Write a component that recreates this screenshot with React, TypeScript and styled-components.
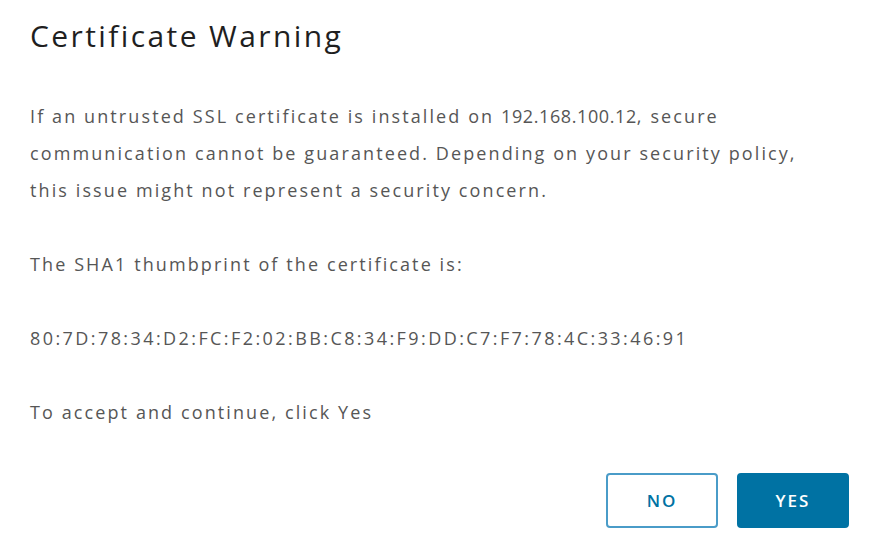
import styled, { createGlobalStyle } from "styled-components";

const GlobalStyle = createGlobalStyle`
  html, body {
    margin: 0;
    padding: 0;
    background: #ffffff;
  }
  body {
    font-family: "Open Sans", "Liberation Sans", sans-serif;
  }
`;

const Modal = styled.div`
  width: 870px;
  height: 550px;
  box-sizing: border-box;
  padding: 14px 21px 22px 30px;
  display: flex;
  flex-direction: column;
`;

const Title = styled.h1`
  margin: 0;
  font-family: "Open Sans", sans-serif;
  font-weight: 400;
  font-size: 30px;
  line-height: 44px;
  color: #1f1f1f;
  letter-spacing: 2.4px;
`;

const Body = styled.div`
  margin-top: 40px;
  flex: 1;
`;

const Para = styled.p<{ $wide?: boolean }>`
  margin: 0 0 37px 0;
  font-size: 18px;
  line-height: 37px;
  color: #565656;
  letter-spacing: ${(p) => (p.$wide ? "2.42px" : "2.1px")};
  white-space: nowrap;
`;

const Address = styled.span`
  letter-spacing: 0.6px;
`;

const Footer = styled.div`
  display: flex;
  justify-content: flex-end;
  gap: 19px;
`;

const Button = styled.button<{ $primary?: boolean }>`
  width: 112px;
  height: 55px;
  border-radius: 4px;
  border: 2px solid ${(p) => (p.$primary ? "#0072a3" : "#4a9cc8")};
  background: ${(p) => (p.$primary ? "#0072a3" : "#ffffff")};
  color: ${(p) => (p.$primary ? "#ffffff" : "#0072a3")};
  font-family: "Open Sans", sans-serif;
  font-size: 17px;
  font-weight: 600;
  letter-spacing: 2px;
  cursor: pointer;
`;

export default function App() {
  return (
    <>
      <GlobalStyle />
      <Modal>
        <Title>Certificate Warning</Title>
        <Body>
          <Para>
            If an untrusted SSL certificate is installed on <Address>192.168.100.12</Address>, secure
            <br />
            communication cannot be guaranteed. Depending on your security policy,
            <br />
            this issue might not represent a security concern.
          </Para>
          <Para>The SHA1 thumbprint of the certificate is:</Para>
          <Para $wide>80:7D:78:34:D2:FC:F2:02:BB:C8:34:F9:DD:C7:F7:78:4C:33:46:91</Para>
          <Para>To accept and continue, click Yes</Para>
        </Body>
        <Footer>
          <Button>NO</Button>
          <Button $primary>YES</Button>
        </Footer>
      </Modal>
    </>
  );
}
